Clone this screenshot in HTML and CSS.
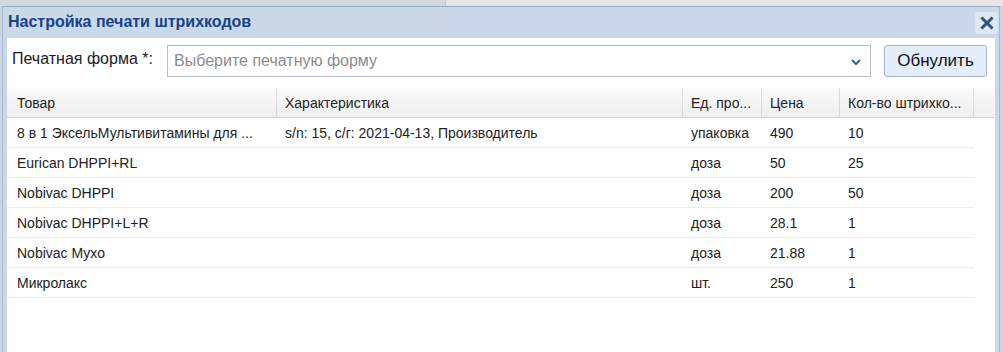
FILE: index.html
```html
<!DOCTYPE html>
<html lang="ru">
<head>
    <meta charset="UTF-8">
    <title>Настройка печати штрихкодов</title>
    <link rel="stylesheet" href="styles.css">
</head>
<body>

<div class="window">
    <div class="window-header">
        <span class="window-title">Настройка печати штрихкодов</span>
        <button class="close-btn" title="Закрыть">
            <svg width="14" height="14" viewBox="0 0 14 14">
                <path d="M2.5 2.5 L11.5 11.5 M11.5 2.5 L2.5 11.5" stroke="#2f5387" stroke-width="3" stroke-linecap="square"/>
            </svg>
        </button>
    </div>

    <div class="window-body">
        <div class="form-row">
            <label class="form-label">Печатная форма *:</label>
            <div class="combo">
                <span class="combo-placeholder">Выберите печатную форму</span>
                <svg class="combo-arrow" width="12" height="8" viewBox="0 0 12 8">
                    <path d="M2 2 L6 6 L10 2" fill="none" stroke="#3b6394" stroke-width="2.2"/>
                </svg>
            </div>
            <button class="reset-btn">Обнулить</button>
        </div>

        <div class="grid">
            <div class="grid-head">
                <div class="cell c-name">Товар</div>
                <div class="cell c-char">Характеристика</div>
                <div class="cell c-unit">Ед. про...</div>
                <div class="cell c-price">Цена</div>
                <div class="cell c-qty">Кол-во штрихко...</div>
                <div class="cell c-rest"></div>
            </div>
            <div class="grid-rows">
                <div class="grid-row">
                    <div class="cell c-name">8 в 1 ЭксельМультивитамины для ...</div>
                    <div class="cell c-char">s/n: 15, с/г: 2021-04-13, Производитель</div>
                    <div class="cell c-unit">упаковка</div>
                    <div class="cell c-price">490</div>
                    <div class="cell c-qty">10</div>
                </div>
                <div class="grid-row">
                    <div class="cell c-name">Eurican DHPPI+RL</div>
                    <div class="cell c-char"></div>
                    <div class="cell c-unit">доза</div>
                    <div class="cell c-price">50</div>
                    <div class="cell c-qty">25</div>
                </div>
                <div class="grid-row">
                    <div class="cell c-name">Nobivac DHPPI</div>
                    <div class="cell c-char"></div>
                    <div class="cell c-unit">доза</div>
                    <div class="cell c-price">200</div>
                    <div class="cell c-qty">50</div>
                </div>
                <div class="grid-row">
                    <div class="cell c-name">Nobivac DHPPI+L+R</div>
                    <div class="cell c-char"></div>
                    <div class="cell c-unit">доза</div>
                    <div class="cell c-price">28.1</div>
                    <div class="cell c-qty">1</div>
                </div>
                <div class="grid-row">
                    <div class="cell c-name">Nobivac Мухо</div>
                    <div class="cell c-char"></div>
                    <div class="cell c-unit">доза</div>
                    <div class="cell c-price">21.88</div>
                    <div class="cell c-qty">1</div>
                </div>
                <div class="grid-row">
                    <div class="cell c-name">Микролакс</div>
                    <div class="cell c-char"></div>
                    <div class="cell c-unit">шт.</div>
                    <div class="cell c-price">250</div>
                    <div class="cell c-qty">1</div>
                </div>
            </div>
        </div>
    </div>
</div>

</body>
</html>
```

FILE: styles.css
```css
html, body {
    height: 100%;
}
body {
    margin: 0;
    padding: 6px 0 0 2px;
    box-sizing: border-box;
    font-family: Arial, "Liberation Sans", sans-serif;
    background: linear-gradient(to right, #d2d9e1 0, #d2d9e1 445px, #c8c8c8 445px, #c8c8c8 446px, #e6e6e6 446px);
    background-size: 100% 6px;
    background-repeat: no-repeat;
    background-color: #c9d6e6;
    overflow: hidden;
}
.window {
    width: 998px;
    height: 100%;
    box-sizing: border-box;
    background: #cbd8e8;
    border-top: 1px solid #99abc6;
    border-left: 1px solid #a9b9cf;
    border-right: 1px solid #a9b9cf;
    padding: 0 4px;
    display: flex;
    flex-direction: column;
}
.window-header {
    height: 31px;
    display: flex;
    align-items: center;
    justify-content: space-between;
    padding-left: 1px;
}
.window-title {
    font-size: 16px;
    font-weight: bold;
    color: #15428b;
    margin-top: -2px;
}
.close-btn {
    width: 23px;
    height: 22px;
    margin-right: -3px;
    border: none;
    border-radius: 3px;
    background: #dfe7f1;
    padding: 0;
    display: flex;
    align-items: center;
    justify-content: center;
    cursor: pointer;
}
.window-body {
    flex: 1;
    background: #fff;
    padding: 7px 0 0 0;
}
.form-row {
    display: flex;
    align-items: center;
    height: 32px;
    padding: 0 8px 0 5px;
}
.form-label {
    width: 155px;
    font-size: 16px;
    color: #222;
    margin-top: -5px;
}
.combo {
    flex: 1;
    height: 32px;
    box-sizing: border-box;
    border: 1px solid #b7bcc7;
    display: flex;
    align-items: center;
    justify-content: space-between;
    padding: 0 8px 0 6px;
}
.combo-placeholder {
    font-size: 16px;
    color: #8c8c8c;
}
.combo-arrow {
    margin-top: 1px;
}
.reset-btn {
    margin-left: 13px;
    width: 103px;
    height: 32px;
    box-sizing: border-box;
    border: 1px solid #a6b4c9;
    border-radius: 3px;
    background: #e4eefa;
    font-family: Arial, "Liberation Sans", sans-serif;
    font-size: 17px;
    color: #111;
    padding: 0;
    cursor: pointer;
}
.grid {
    margin-top: 11px;
}
.grid-head {
    display: flex;
    height: 29px;
    background: linear-gradient(#fafafa, #efefef);
    border-bottom: 1px solid #d5d5d5;
    color: #222;
}
.grid-head .cell {
    border-right: 1px solid #dadada;
}
.grid-head .c-rest {
    flex: 1;
    border-right: none;
}
.cell {
    box-sizing: border-box;
    padding: 0 8px;
    font-size: 14px;
    display: flex;
    align-items: center;
    white-space: nowrap;
    overflow: hidden;
}
.c-name { width: 270px; padding-left: 10px; }
.c-char { width: 406px; }
.c-unit { width: 79px; }
.c-price { width: 78px; }
.c-qty { width: 134px; }
.grid-rows {
    width: 967px;
}
.grid-row {
    display: flex;
    height: 29px;
    border-bottom: 1px solid #ececec;
    color: #222;
}
```
